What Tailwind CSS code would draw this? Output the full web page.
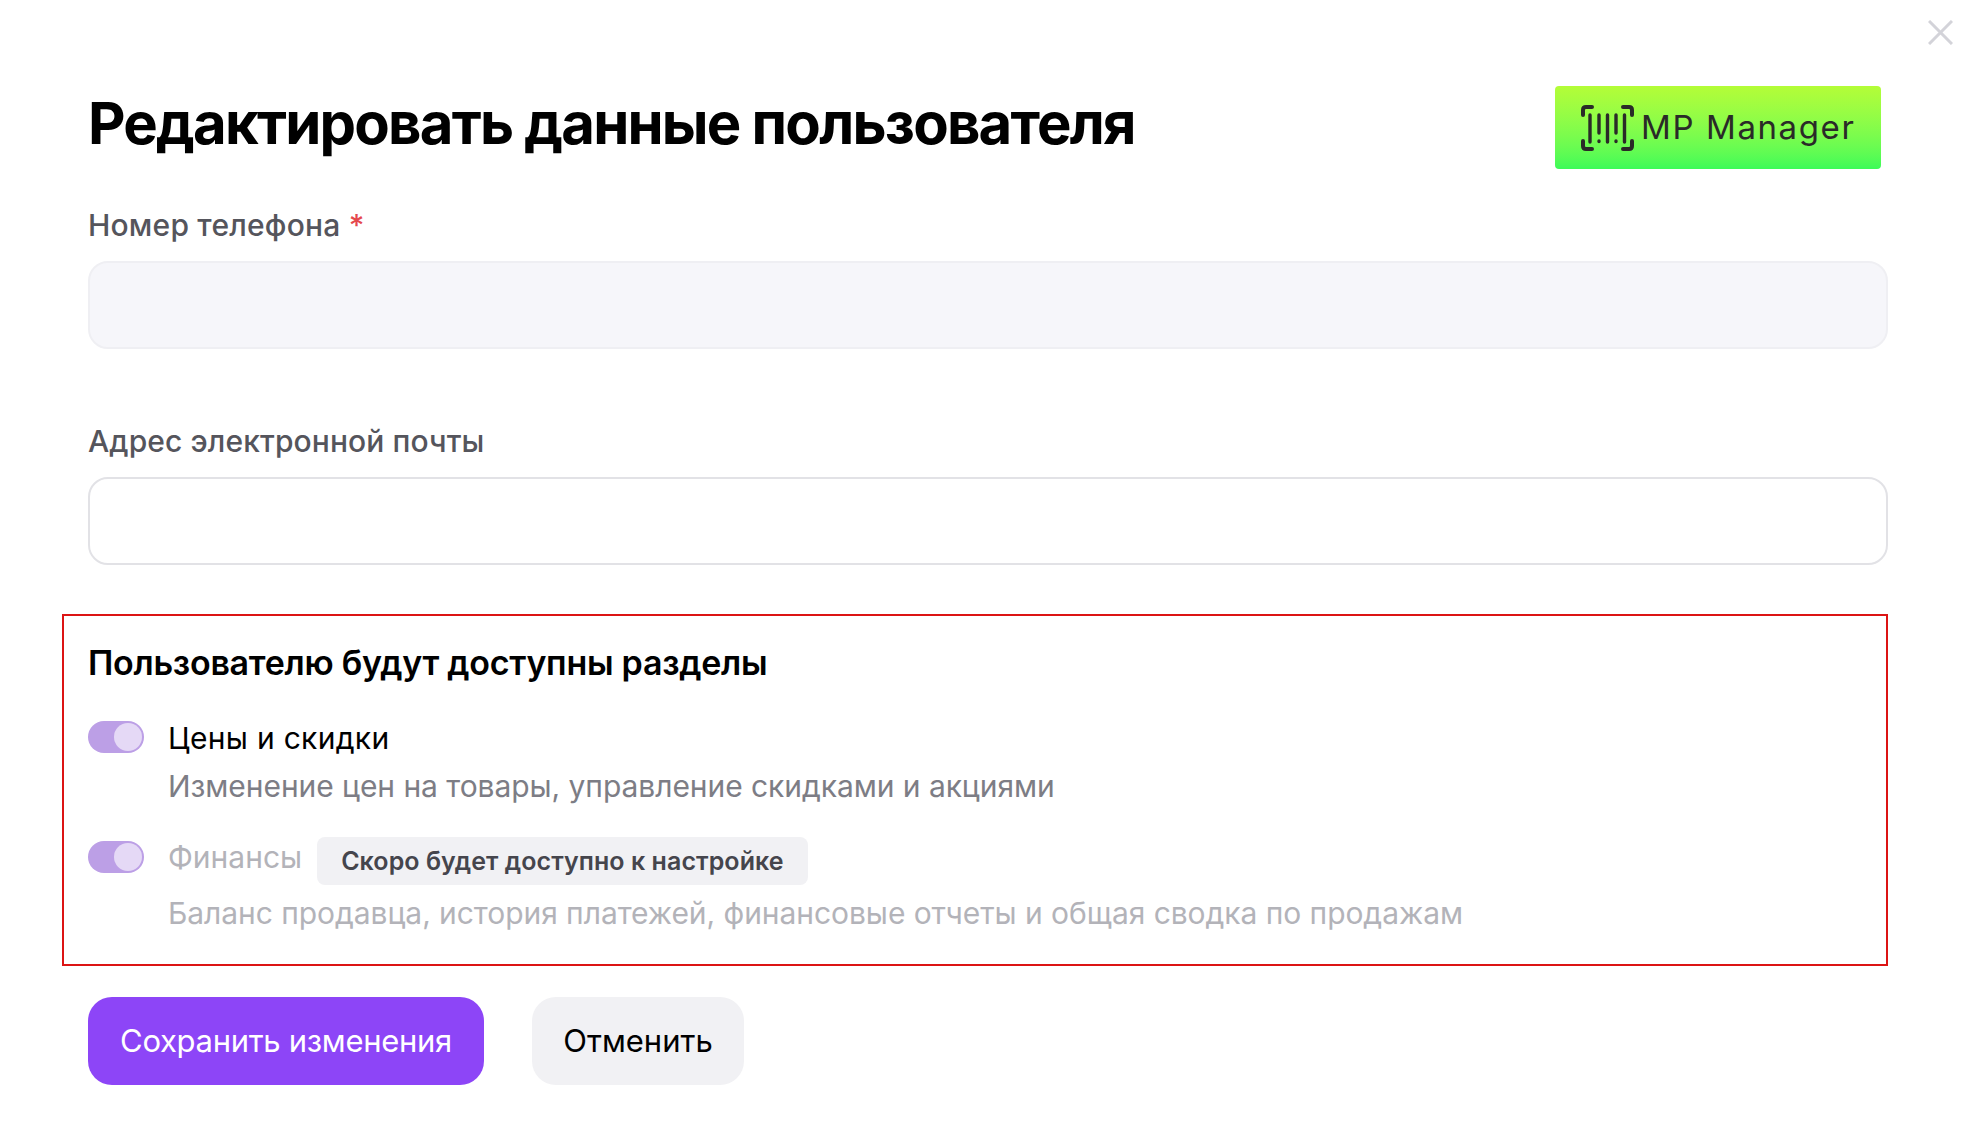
<!DOCTYPE html>
<html lang="en">
<head>
    <meta charset="UTF-8">
    <title>Редактировать данные пользователя</title>
    <script src="https://cdn.jsdelivr.net/npm/@tailwindcss/browser@4"></script>
</head>
<body class="bg-white font-['Inter',sans-serif] text-black">
<div class="relative w-[1970px] h-[1140px] overflow-hidden pl-[88px] pr-[82px] pt-[86px]">
    <svg class="absolute left-[1928px] top-[20px] w-[25px] h-[25px] text-[#d3d3d9]" viewBox="0 0 25 25" fill="none" stroke="currentColor" stroke-width="3"><path d="M1 1l23 23M24 1L1 24"/></svg>

    <div class="flex justify-between items-start h-[119px] pr-[7px]">
        <h1 class="text-[58px] leading-[72px] font-bold tracking-[-1.78px] mt-[1px]">Редактировать данные пользователя</h1>
        <div class="w-[326px] h-[83px] rounded-[4px] bg-linear-to-b from-[#b4fd37] to-[#3bfb58] flex items-center pl-[26px] gap-[7px] shrink-0">
            <svg class="w-[53px] h-[46px] text-[#2a2a28]" viewBox="0 0 53 46" fill="none" stroke="currentColor" stroke-width="4" stroke-linecap="round">
                <path d="M11 2H5Q2 2 2 5V10M42 2h6Q51 2 51 5V10M11 44H5Q2 44 2 41V36M42 44h6Q51 44 51 41V36"/>
                <path d="M9 10v27M18 10v18M18 36v.5M26.500 10v27M35 10v18M35 36v.5M43.500 10v27" stroke-width="3.400"/>
            </svg>
            <span class="text-[33px] leading-none tracking-[1.6px] text-[#2a2a28]">MP Manager</span>
        </div>
    </div>

    <label class="block text-[30px] leading-[40px] tracking-[0.2px] text-[#55555c] font-medium">Номер телефона <span class="text-[#e5484d]">*</span></label>
    <div class="mt-[16px] h-[88px] rounded-[20px] border-2 border-[#efeff3] bg-[#f6f6fa]"></div>

    <label class="block mt-[72px] text-[30px] leading-[40px] tracking-[0.1px] text-[#55555c] font-medium">Адрес электронной почты</label>
    <div class="mt-[16px] h-[88px] rounded-[20px] border-2 border-[#e2e2e6] bg-white"></div>

    <section class="mt-[49px] ml-[-26px] h-[352px] border-2 border-[#dc1414] pl-[24px] pt-[25px]">
        <h2 class="text-[34px] leading-[44px] font-semibold tracking-[-0.27px]">Пользователю будут доступны разделы</h2>

        <div class="flex mt-[33px] gap-[24px]">
            <div class="relative w-[56px] h-[32px] rounded-full bg-[#bc9fe6] shrink-0 mt-[3px]">
                <div class="absolute right-[2px] top-[2px] w-[28px] h-[28px] rounded-full bg-[#e5d9f6]"></div>
            </div>
            <div>
                <div class="text-[30px] leading-[40px] tracking-[0.3px]">Цены и скидки</div>
                <div class="mt-[8px] text-[30px] leading-[40px] tracking-[-0.06px] text-[#7d7d85]">Изменение цен на товары, управление скидками и акциями</div>
            </div>
        </div>

        <div class="flex mt-[31px] gap-[24px]">
            <div class="relative w-[56px] h-[32px] rounded-full bg-[#bc9fe6] shrink-0 mt-[4px]">
                <div class="absolute right-[2px] top-[2px] w-[28px] h-[28px] rounded-full bg-[#e5d9f6]"></div>
            </div>
            <div>
                <div class="flex items-start gap-[15px]">
                    <span class="text-[30px] leading-[40px] text-[#b3b3b9]">Финансы</span>
                    <span class="h-[48px] px-[24px] rounded-[8px] bg-[#f1f1f4] flex items-center text-[25px] font-semibold tracking-[0.06px] text-[#45454c]"><span class="relative top-[1px]">Скоро будет доступно к настройке</span></span>
                </div>
                <div class="mt-[8px] text-[30px] leading-[40px] tracking-[-0.06px] text-[#b3b3b9]">Баланс продавца, история платежей, финансовые отчеты и общая сводка по продажам</div>
            </div>
        </div>
    </section>

    <div class="flex gap-[48px] mt-[31px]">
        <button class="h-[88px] w-[396px] rounded-[24px] bg-[#8d45f7] text-white text-[31px] tracking-[-0.3px]">Сохранить изменения</button>
        <button class="h-[88px] w-[212px] rounded-[24px] bg-[#f1f1f4] text-black text-[31px]">Отменить</button>
    </div>
</div>
</body>
</html>
